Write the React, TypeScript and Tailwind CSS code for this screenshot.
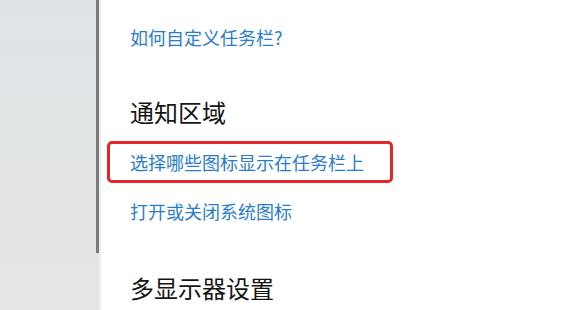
import React from "react";

export default function App() {
  return (
    <div
      className="flex h-[310px] w-[572px] overflow-hidden bg-white"
      style={{ fontFamily: '"Noto Sans CJK SC", "Noto Sans", sans-serif' }}
    >
      <div className="h-full w-[96px] bg-gradient-to-b from-[#dde4e7] via-[#e1e4e5] to-[#e5e5e4]" />
      <div className="flex h-full w-[3px] flex-col bg-[#e3e5e5]">
        <div className="h-[253px] w-full bg-[#7a7a7a]" />
      </div>
      <div className="h-full w-[2px] bg-[#eceeef]" />
      <div className="flex flex-1 flex-col pl-[29px]">
        <div className="mt-[25px] text-[18px] leading-[24px] text-[#2a7dcc]">
          如何自定义任务栏?
        </div>
        <div className="mt-[47px] text-[24px] leading-[32px] text-[#151515]">
          通知区域
        </div>
        <div className="-ml-[23px] mt-[13px] h-[42px] w-[286px] rounded-[5px] border-[3px] border-[#e2262a] pl-[20px] text-[18px] leading-[36px] text-[#2a7dcc]">
          选择哪些图标显示在任务栏上
        </div>
        <div className="mt-[16px] text-[18px] leading-[24px] text-[#2a7dcc]">
          打开或关闭系统图标
        </div>
        <div className="mt-[49px] text-[24px] leading-[32px] text-[#151515]">
          多显示器设置
        </div>
      </div>
    </div>
  );
}
